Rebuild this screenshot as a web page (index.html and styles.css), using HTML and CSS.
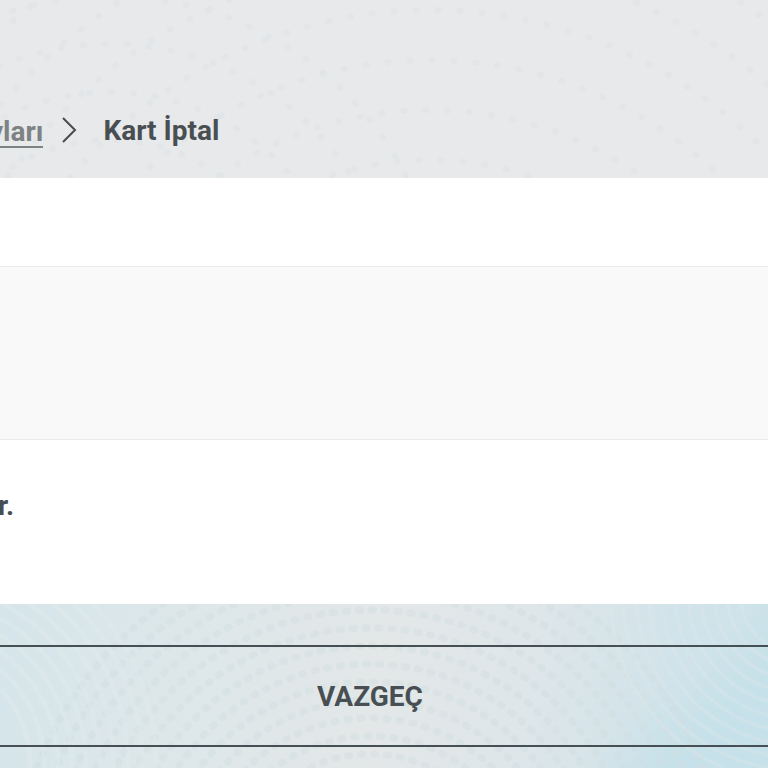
FILE: index.html
```html
<!DOCTYPE html>
<html lang="tr">
<head>
    <meta charset="UTF-8">
    <meta name="viewport" content="width=device-width, initial-scale=1.0">
    <title>Kart İptal</title>
    <link rel="stylesheet" href="styles.css">
    <script src="pattern.js" defer></script>
</head>
<body>
    <header class="header">
        <svg class="pattern" id="headerPattern" viewBox="0 0 768 178" preserveAspectRatio="xMidYMid slice" aria-hidden="true"></svg>
        <nav class="breadcrumb">
            <a href="#">yları</a>
            <svg class="arrow" viewBox="0 0 16 26" aria-hidden="true">
                <path d="M2 1 L14 13 L2 25"></path>
            </svg>
            <span class="current">Kart İptal</span>
        </nav>
    </header>
    <main class="content">
        <div class="panel"></div>
        <p class="message">r.</p>
    </main>
    <footer class="footer">
        <svg class="pattern" id="footerPattern" viewBox="0 0 768 164" preserveAspectRatio="xMidYMid slice" aria-hidden="true"></svg>
        <button type="button" class="cancel">VAZGEÇ</button>
    </footer>
</body>
</html>
```
FILE: styles.css
```css
body {
    font-family: Roboto, 'Noto Sans', sans-serif;
    font-weight: bold;
    background-color: #fff;
    color: #484f53;
    margin: 0;
    min-height: 100vh;
    display: flex;
    flex-direction: column;
    overflow-x: hidden;
}
.header,
.footer {
    position: relative;
    overflow: hidden;
}
.header {
    background-color: #e8e9ea;
    padding: 112px 0 28px;
}
.pattern {
    position: absolute;
    top: 0;
    left: 0;
    width: 100%;
    height: 100%;
}
.pattern circle {
    fill: none;
    stroke-linecap: round;
}
.breadcrumb {
    position: relative;
    display: flex;
    align-items: center;
    height: 38px;
    margin-left: -11px;
    font-size: 28px;
    line-height: 40px;
}
.breadcrumb a {
    color: #7d8285;
    line-height: 28px;
    padding-top: 4px;
    text-decoration: none;
    border-bottom: 2px solid #7d8285;
}
.arrow {
    width: 16px;
    height: 26px;
    margin: 0 26px 2px 18px;
}
.arrow path {
    fill: none;
    stroke: #484c4f;
    stroke-width: 2;
}
.content {
    padding: 88px 0 76px;
}
.panel {
    height: 172px;
    background-color: #f9f9f9;
    border-top: 1px solid #ececec;
    border-bottom: 1px solid #ececec;
}
.message {
    margin: 44px 0 0 -2px;
    font-size: 28px;
    line-height: 44px;
}
.footer {
    flex: 1;
    padding: 41px 0 20px;
    background: linear-gradient(135deg, transparent 80%, #c6e1e9 90%),
        linear-gradient(100deg, #d5e5eb 0%, #dde7e9 24%, #e3e7e8 50%, #dee6e9 68%, #d1e3ea 85%, #cde2e9 100%);
}
.cancel {
    position: relative;
    display: block;
    width: 100%;
    height: 102px;
    padding: 0 28px 0 0;
    border: solid #464f54;
    border-width: 2px 0;
    background: none;
    color: inherit;
    font: inherit;
    font-size: 28px;
    cursor: pointer;
}
```
FILE: pattern.js
```javascript
// Dotted rings around one centre
function drawRings(id, cx, cy, from, to, step, color, width, dash, opacity) {
    var svg = document.getElementById(id);
    for (var r = from; r <= to; r += step) {
        var ring = document.createElementNS('http://www.w3.org/2000/svg', 'circle');
        ring.setAttribute('cx', cx);
        ring.setAttribute('cy', cy);
        ring.setAttribute('r', r);
        ring.setAttribute('stroke', color);
        ring.setAttribute('stroke-width', width);
        ring.setAttribute('stroke-dasharray', dash);
        ring.setAttribute('stroke-opacity', opacity);
        svg.appendChild(ring);
    }
}

drawRings('headerPattern', 110, 330, 190, 350, 48, '#dee4e6', 6, '1 21', 0.5);
drawRings('headerPattern', 430, 480, 320, 620, 50, '#dee4e6', 6, '1 21', 0.5);

drawRings('footerPattern', 370, 290, 140, 370, 18, '#d0dee1', 7, '2 11', 0.45);
drawRings('footerPattern', -80, 160, 110, 240, 14, '#e4eaec', 5, '9 5', 0.35);
drawRings('footerPattern', 800, -10, 60, 200, 13, '#e0e8ec', 4, '9 4', 0.3);
```
